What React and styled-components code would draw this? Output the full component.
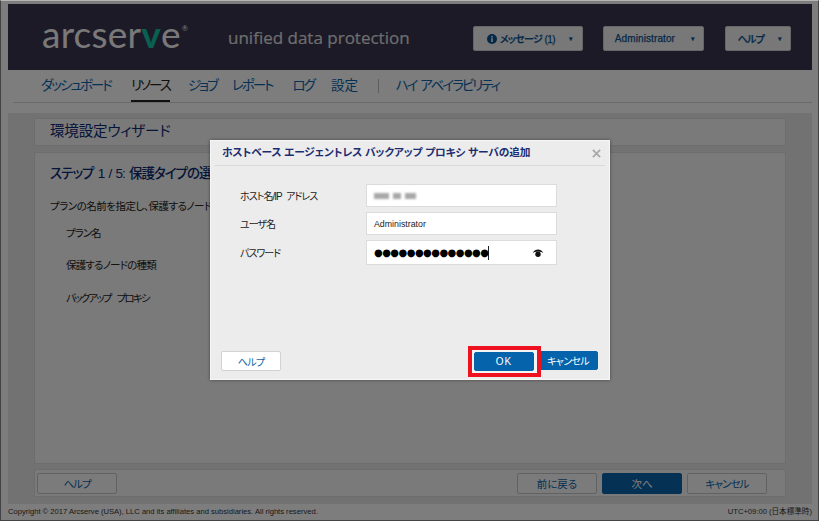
import React from 'react';
import styled, { createGlobalStyle } from 'styled-components';

const Global = createGlobalStyle`
  html, body { margin: 0; padding: 0; background: #fff; }
  #root { width: 819px; height: 521px; overflow: hidden; }
  * { box-sizing: border-box; }
`;
const JP = `"Liberation Sans", "Noto Sans CJK JP", sans-serif`;

const Page = styled.div`
  position: relative;
  width: 819px; height: 521px;
  border: 1px solid #444;
  border-top-color: #b5b5b5;
  background: #fafafa;
  padding: 3px 6px 0 7px;
  font-family: ${JP};
  font-feature-settings: "palt";
  display: flex; flex-direction: column;
  overflow: hidden;
`;
const Header = styled.header`
  height: 66px; flex: none;
  background: #38344e;
  display: flex; align-items: flex-start;
  padding: 22px 21px 0 34px;
`;
const Logo = styled.div`
  font-family: "Lato", sans-serif; font-size: 37px; line-height: 24px; font-weight: 400;
  color: #f2f2f2; letter-spacing: .25px; width: 186px; flex: none; position: relative; top: -4px;
  display: flex;
  span { color: #13c0a4; font-weight: 700; }
  sup { font-size: 7px; line-height: 8px; margin: 2px 0 0 1px; }
`;
const Tagline = styled.div`
  font-family: "Open Sans", sans-serif; font-size: 17px; line-height: 24px; color: #dcdcdc;
  flex: 1; -webkit-text-stroke: .2px #dcdcdc;
`;
const HeadBtn = styled.button`
  width: ${p => p.$w}px; height: 25px; margin-left: ${p => p.$ml}px; flex: none;
  background: #f1f1f1; border: 1px solid #ccc; border-radius: 2px;
  color: #08508f; font: 500 10px ${JP}; font-feature-settings: "palt"; padding: 0 0 0 3px;
  letter-spacing: ${p => p.$ls || 0}px; -webkit-text-stroke: .25px #08508f;
  display: flex; align-items: center; justify-content: center; gap: 3px;
  i { font-style: normal; color: #08508f; font-size: 7px; margin-left: ${p => p.$gap}px; }
`;
const Nav = styled.nav`
  height: 33px; margin: 0 0 0 5px; flex: none; display: flex; align-items: flex-start;
  border-bottom: 1px solid #d5d5d5; padding: 7px 0 0 28px;
`;
const NavItem = styled.a`
  font-size: 13.5px; line-height: 18px; color: #0a63a8; white-space: nowrap;
  letter-spacing: ${p => p.$ls ?? -2}px; word-spacing: 2px;
  margin-right: ${p => p.$mr}px; height: 25px;
  ${p => p.$active && `color:#222; border-bottom: 2px solid #222;`}
`;
const NavSep = styled.span`
  width: 1px; height: 14px; background: #bbb; margin: 2px 17px 0 0;
`;
const Main = styled.main`
  margin-top: 10px; height: 391px; flex: none; background: #e4e4e4;
  padding: 5px 26px 0 26px; display: flex; flex-direction: column; gap: 6px;
`;
const Card = styled.section`
  background: #f4f4f4; border: 1px solid #dadada; flex: none;
`;
const TitleCard = styled(Card)`
  height: 28px; padding: 2px 0 0 15px;
  font-size: 14.5px; line-height: 20px; color: #0b2a72; letter-spacing: -.15px;
`;
const StepCard = styled(Card)`
  height: 312px; padding: 12px 0 0 15px; overflow: hidden;
`;
const StepTitle = styled.h2`
  margin: 0; font-size: 13.5px; line-height: 18px; color: #0b2a72; font-weight: 500; white-space: nowrap;
  letter-spacing: -1px; word-spacing: 1.5px;
`;
const StepDesc = styled.p`
  margin: 16px 0 0 0; font-size: 10.5px; line-height: 14px; color: #222; white-space: nowrap;
  letter-spacing: -.5px;
`;
const StepLabel = styled.div`
  margin: ${p => p.$mt}px 0 0 16px; font-size: 10.5px; line-height: 14px; color: #222;
  letter-spacing: ${p => p.$ls}px; word-spacing: 5px;
`;
const FootCard = styled(Card)`
  height: 28px; margin-top: -1px; padding: 3px 17px 0 2px; display: flex;
`;
const WizBtn = styled.button`
  width: 80px; height: 21px; margin-left: ${p => p.$ml || 0}px;
  background: ${p => p.$primary ? '#0a63a8' : '#f6f6f6'};
  border: 1px solid ${p => p.$primary ? '#0a63a8' : '#c5c5c5'}; border-radius: 2px;
  color: ${p => p.$primary ? '#fff' : '#0a63a8'}; font: 10.5px ${JP}; font-feature-settings: "palt"; padding: 0;
  letter-spacing: ${p => p.$ls || 0}px;
`;
const Footer = styled.footer`
  flex: 1; display: flex; justify-content: space-between; align-items: flex-start;
  padding-top: 3px;
  font-size: 7.6px; line-height: 10px; color: #333;
`;
const Overlay = styled.div`
  position: absolute; inset: 0; background: rgba(0,0,0,.5);
`;
const Modal = styled.div`
  position: absolute; left: 209px; top: 139px; width: 400px; height: 240px;
  background: #ececec; border: 1px solid #f6f6f6; box-shadow: 0 0 3px rgba(0,0,0,.45);
  display: flex; flex-direction: column; padding: 0 4px 8px 4px;
  font-family: ${JP};
`;
const ModalHead = styled.div`
  height: 25px; flex: none; border-bottom: 1px solid #d9d9d9;
  padding: 3px 3px 0 7px;
  display: flex; justify-content: space-between; align-items: flex-start;
  font-size: 10.7px; line-height: 17px; font-weight: 700; color: #1b2d72; letter-spacing: -.12px;
`;
const CloseX = styled.svg`
  width: 9px; height: 9px; margin-top: 5px; margin-right: 1px; stroke: #a9a9a9; stroke-width: 2; fill: none;
`;
const Form = styled.div`
  flex: 1; padding: 18px 0 0 25px;
  display: grid; grid-template-columns: 126px 191px; grid-auto-rows: min-content; row-gap: 5px;
  align-items: center;
`;
const Label = styled.label`
  font-size: 10px; color: #222; line-height: 14px; letter-spacing: -1px; word-spacing: 3px;
  padding-top: ${p => p.$pt || 3}px;
`;
const Field = styled.div`
  height: ${p => p.$h || 23}px; background: #fff; border: 1px solid #dcdcdc;
  display: flex; align-items: center; padding: 0 7px; position: relative;
  font-size: 8.8px; color: #222;
`;
const Blur = styled.span`
  display: inline-block; width: ${p => p.$w}px; height: 6px; margin-right: ${p => p.$mr}px;
  background: #a8a8a8; filter: blur(1.2px);
`;
const Dots = styled.span`
  font-family: "DejaVu Sans", sans-serif; font-size: 10px; letter-spacing: -.55px; color: #000; line-height: 14px;
  border-right: 1px solid #222; white-space: nowrap;
`;
const Eye = styled.svg`
  position: absolute; right: 12px; top: 8px; width: 12px; height: 9px;
`;
const Actions = styled.div`
  flex: none; display: flex; padding: 0 6px 0 6px; height: 20px; align-items: flex-start;
`;
const ModalBtn = styled.button`
  width: 60px; height: ${p => p.$h || 20}px; padding: 0; border-radius: 2px; flex: none;
  background: ${p => p.$primary ? '#0563ab' : '#fff'};
  border: 1px solid ${p => p.$primary ? '#0563ab' : '#d2d2d2'};
  color: ${p => p.$primary ? '#fff' : '#0a63a8'};
  font: 10px ${JP}; font-feature-settings: "palt";
  letter-spacing: ${p => p.$ls ?? -.7}px;
  margin-left: ${p => p.$ml || 0}px;
`;
const Highlight = styled.div`
  position: relative; z-index: 1; flex: none; display: flex;
  margin: -5px -8px -6px ${p => p.$ml}px;
  padding: 2px 3px 2px 2px;
  background: #f4f4f4; border: 4px solid #ee1120;
`;

export default function App() {
  return (
    <Page>
      <Global />
      <Header>
        <Logo>arcser<span>v</span>e<sup>®</sup></Logo>
        <Tagline>unified data protection</Tagline>
        <HeadBtn $w={110} $gap={11} $ls={-.6}>
          <svg width="10" height="10" viewBox="0 0 10 10"><circle cx="5" cy="5" r="5" fill="#08508f"/><rect x="4.2" y="4.2" width="1.6" height="3.8" fill="#f1f1f1"/><rect x="4.2" y="2" width="1.6" height="1.5" fill="#f1f1f1"/></svg>
          メッセージ (1)<i>▾</i>
        </HeadBtn>
        <HeadBtn $w={101} $ml={20} $gap={13} $ls={.1}>Administrator<i>▾</i></HeadBtn>
        <HeadBtn $w={66} $ml={21} $gap={11} $ls={-.8}>ヘルプ<i>▾</i></HeadBtn>
      </Header>
      <Nav>
        <NavItem $mr={20}>ダッシュボード</NavItem>
        <NavItem $mr={18} $active>リソース</NavItem>
        <NavItem $mr={15}>ジョブ</NavItem>
        <NavItem $mr={20}>レポート</NavItem>
        <NavItem $mr={17}>ログ</NavItem>
        <NavItem $mr={20} $ls={0}>設定</NavItem>
        <NavSep />
        <NavItem>ハイ アベイラビリティ</NavItem>
      </Nav>
      <Main>
        <TitleCard>環境設定ウィザード</TitleCard>
        <StepCard>
          <StepTitle>ステップ 1 / 5: 保護タイプの選択</StepTitle>
          <StepDesc>プランの名前を指定し、保護するノードの種類を選択します。</StepDesc>
          <StepLabel $mt={13} $ls={-1}>プラン名</StepLabel>
          <StepLabel $mt={18} $ls={-.8}>保護するノードの種類</StepLabel>
          <StepLabel $mt={19} $ls={-1.8}>バックアップ プロキシ</StepLabel>
        </StepCard>
        <FootCard>
          <WizBtn $ls={-1}>ヘルプ</WizBtn>
          <WizBtn $ml={400}>前に戻る</WizBtn>
          <WizBtn $ml={5} $primary>次へ</WizBtn>
          <WizBtn $ml={5} $ls={-.9}>キャンセル</WizBtn>
        </FootCard>
      </Main>
      <Footer>
        <span>Copyright © 2017 Arcserve (USA), LLC and its affiliates and subsidiaries. All rights reserved.</span>
        <span>UTC+09:00 (日本標準時)</span>
      </Footer>
      <Overlay />
      <Modal>
        <ModalHead>
          ホストベース エージェントレス バックアップ プロキシ サーバの追加
          <CloseX viewBox="0 0 10 10"><path d="M1 1 9 9M9 1 1 9" /></CloseX>
        </ModalHead>
        <Form>
          <Label>ホスト名/IP アドレス</Label>
          <Field><Blur $w={15} $mr={4} /><Blur $w={8} $mr={4} /><Blur $w={11} $mr={0} /></Field>
          <Label>ユーザ名</Label>
          <Field>Administrator</Field>
          <Label>パスワード</Label>
          <Field $h={25}>
            <Dots>●●●●●●●●●●●●●●</Dots>
            <Eye viewBox="0 0 12 9">
              <path d="M0.5 4.2C2 1.5 4 0.5 6 .5s4 1 5.5 3.7C10.2 3.2 8.3 2.4 6 2.4S1.8 3.2.5 4.2z" fill="#111"/>
              <circle cx="6" cy="5.3" r="2.7" fill="#111"/>
            </Eye>
          </Field>
        </Form>
        <Actions>
          <ModalBtn>ヘルプ</ModalBtn>
          <Highlight $ml={187}>
            <ModalBtn $primary $h={19} $ls={1}>OK</ModalBtn>
          </Highlight>
          <ModalBtn $ml={5} $primary $h={19}>キャンセル</ModalBtn>
        </Actions>
      </Modal>
    </Page>
  );
}
